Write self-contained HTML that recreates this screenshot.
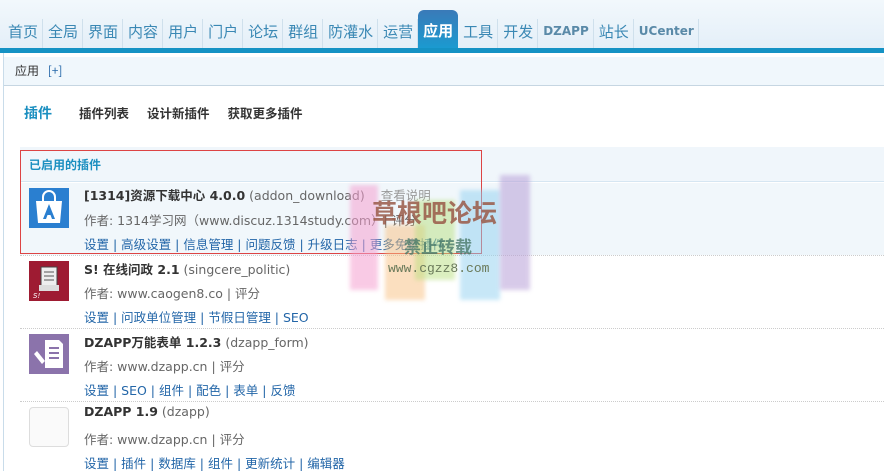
<!DOCTYPE html>
<html><head><meta charset="utf-8"><style>
*{margin:0;padding:0;box-sizing:border-box}
body{width:884px;height:471px;overflow:hidden;background:#fff;font-family:"DejaVu Sans","Noto Sans CJK SC",sans-serif;font-size:12.5px;color:#333;position:relative}
.abs{position:absolute}
#top{left:0;top:0;width:884px;height:48px;background:linear-gradient(#f2f8fc,#e4eff8)}
#nav{left:3px;top:19px;height:29px;display:flex;font-size:15px;color:#3a88b4;font-family:"Noto Sans CJK SC",sans-serif}
#nav span{padding:0 4px 0 5px;line-height:25px;height:29px;border-right:1px solid #cfe0ec}
#nav span.on{background:linear-gradient(#3a7ab8,#1b9ad0);color:#fff;border-radius:6px 6px 0 0;margin-top:-9px;height:38px;line-height:42px;font-weight:bold;border:none;padding:0 5px}
#nav span.b{font-family:"DejaVu Sans",sans-serif;font-weight:bold;font-size:12px;color:#5a8aa8}
#bar{left:0;top:48px;width:884px;height:5px;background:#1592c4}
#sub{left:3px;top:57px;width:881px;height:29px;background:#f0f7fc;border-bottom:1px solid #c6d6e2;font-family:"Noto Sans CJK SC",sans-serif;font-size:12px;line-height:28px;padding-left:12px}
#lb{left:3px;top:53px;width:1px;height:418px;background:#c9dcea}
.tabs{left:24px;top:103px;font-family:"Noto Sans CJK SC",sans-serif;font-weight:bold;font-size:12.5px;color:#333}
.hdr{left:20px;top:147px;width:864px;height:35px;background:#f0f6fb;border-bottom:1px solid #d6e6f2}
.r1{left:20px;top:183px;width:864px;height:72px;background:#f1f7fb}
.dot{left:20px;width:864px;height:1px;border-top:1px dotted #ccc}
.t{left:84px;white-space:nowrap}
.t b{color:#333}
.g{color:#666}
.l{color:#2366a8}
.red{left:20px;top:150px;width:462px;height:104px;border:1px solid #d44}
.ic{left:29px;width:40px;height:40px}
</style></head><body>
<div class="abs" id="top"></div>
<div class="abs" id="nav"><span>首页</span><span>全局</span><span>界面</span><span>内容</span><span>用户</span><span>门户</span><span>论坛</span><span>群组</span><span>防灌水</span><span>运营</span><span class="on">应用</span><span>工具</span><span>开发</span><span class="b">DZAPP</span><span>站长</span><span class="b">UCenter</span></div>
<div class="abs" id="bar"></div>
<div class="abs" id="sub">应用 <span style="color:#2366a8;margin-left:6px">[+]</span></div>
<div class="abs" id="lb"></div>
<div class="abs tabs"><span style="color:#1b8fc0;font-size:14px">插件</span><span style="margin-left:27px">插件列表</span><span style="margin-left:18px">设计新插件</span><span style="margin-left:18px">获取更多插件</span></div>
<div class="abs hdr"></div>
<div class="abs" style="left:29px;top:156px;font-family:'Noto Sans CJK SC',sans-serif;font-weight:bold;color:#1b8fc0;font-size:12px">已启用的插件</div>
<div class="abs r1"></div>
<div class="abs dot" style="top:255px"></div>
<div class="abs dot" style="top:328px"></div>
<div class="abs dot" style="top:401px"></div>

<svg class="abs ic" style="top:188px" viewBox="0 0 40 40"><rect width="40" height="40" fill="#2a7fd0"/><path d="M7 13h26l-2 22H9z" fill="#fff"/><path d="M14 13v-4a6 6 0 0 1 12 0v4" fill="none" stroke="#fff" stroke-width="2"/><path d="M20 16l-6 15h3l1.5-4h3l1.5 4h3z" fill="#2a7fd0"/></svg>
<svg class="abs ic" style="top:261px" viewBox="0 0 40 40"><rect width="40" height="40" fill="#9e1b32"/><rect x="12" y="6" width="16" height="20" fill="#eee" stroke="#444"/><path d="M15 11h10M15 15h10M15 19h10" stroke="#555"/><rect x="10" y="24" width="20" height="6" fill="#ddd"/><text x="4" y="37" font-size="7" fill="#fff" font-style="italic">S!</text></svg>
<svg class="abs ic" style="top:334px" viewBox="0 0 40 40"><rect width="40" height="40" fill="#8b73ab"/><path d="M16 6h14l4 4v24H16z" fill="#fff"/><path d="M20 14h10M20 19h10M20 24h10" stroke="#8b73ab" stroke-width="2"/><path d="M5 20l8 10 3-3-8-10z" fill="#fff"/></svg>
<div class="abs ic" style="top:407px;border:1px solid #ddd;border-radius:4px;background:#fafafa"></div>

<div class="abs t" style="top:185px"><b>[1314]资源下载中心 4.0.0</b> <span class="g">(addon_download)</span> <span style="color:#999;margin-left:12px">查看说明</span></div>
<div class="abs t g" style="top:210px">作者: 1314学习网（www.discuz.1314study.com）| 评分</div>
<div class="abs t l" style="top:234px">设置 | 高级设置 | 信息管理 | 问题反馈 | 升级日志 | 更多免费插件</div>

<div class="abs t" style="top:259px"><b>S! 在线问政 2.1</b> <span class="g">(singcere_politic)</span></div>
<div class="abs t g" style="top:283px">作者: www.caogen8.co | 评分</div>
<div class="abs t l" style="top:307px">设置 | 问政单位管理 | 节假日管理 | SEO</div>

<div class="abs t" style="top:332px"><b>DZAPP万能表单 1.2.3</b> <span class="g">(dzapp_form)</span></div>
<div class="abs t g" style="top:356px">作者: www.dzapp.cn | 评分</div>
<div class="abs t l" style="top:380px">设置 | SEO | 组件 | 配色 | 表单 | 反馈</div>

<div class="abs t" style="top:404px"><b>DZAPP 1.9</b> <span class="g">(dzapp)</span></div>
<div class="abs t g" style="top:429px">作者: www.dzapp.cn | 评分</div>
<div class="abs t l" style="top:453px">设置 | 插件 | 数据库 | 组件 | 更新统计 | 编辑器</div>

<div class="abs red"></div>
<div class="abs" style="left:350px;top:185px;width:28px;height:105px;background:#f5a0d0;opacity:.55;filter:blur(2px)"></div>
<div class="abs" style="left:385px;top:225px;width:40px;height:75px;background:#f9c080;opacity:.5;filter:blur(2px)"></div>
<div class="abs" style="left:415px;top:200px;width:40px;height:80px;background:#b8e080;opacity:.5;filter:blur(2px)"></div>
<div class="abs" style="left:460px;top:190px;width:40px;height:110px;background:#90d0f0;opacity:.5;filter:blur(2px)"></div>
<div class="abs" style="left:500px;top:175px;width:30px;height:115px;background:#b8a0d8;opacity:.55;filter:blur(2px)"></div>
<div class="abs" style="left:372px;top:194px;font-family:'Noto Sans CJK SC',sans-serif;font-weight:bold;font-size:25px;color:#9a5a48;opacity:.85;white-space:nowrap">草根吧论坛</div>
<div class="abs" style="left:404px;top:233px;font-family:'Noto Sans CJK SC',sans-serif;font-weight:bold;font-size:17px;color:#4a7a6a;opacity:.8;white-space:nowrap">禁止转载</div>
<div class="abs" style="left:388px;top:261px;font-family:'Liberation Mono',monospace;font-size:13px;color:#6a7a5a;white-space:nowrap">www.cgzz8.com</div>
</body></html>
